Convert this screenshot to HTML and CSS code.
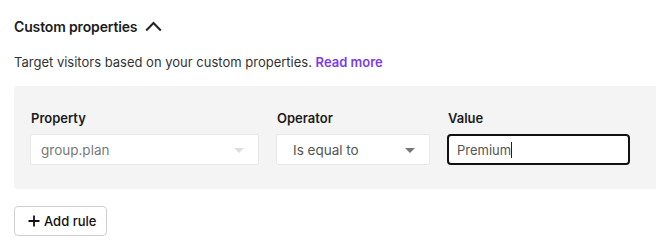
FILE: index.html
```html
<!DOCTYPE html>
<html>
<head>
<meta charset="utf-8">
<link rel="stylesheet" href="styles.css">
</head>
<body>
<div class="page">
  <div class="header">
    <h2 class="title">Custom properties</h2>
    <svg class="chevron" width="17" height="12" viewBox="0 0 17 12"><path d="M1.2 10.5 L8.5 3 L15.8 10.5" fill="none" stroke="#222" stroke-width="2"/></svg>
  </div>
  <p class="desc">Target visitors based on your custom properties. <a class="link">Read more</a></p>
  <div class="panel">
    <div class="field f-prop">
      <label class="label">Property</label>
      <div class="select disabled"><span>group.plan</span><span class="arrow light"></span></div>
    </div>
    <div class="field f-op">
      <label class="label">Operator</label>
      <div class="select op"><span>Is equal to</span><span class="arrow"></span></div>
    </div>
    <div class="field f-val">
      <label class="label">Value</label>
      <div class="input"><span>Premium</span><span class="caret"></span></div>
    </div>
  </div>
  <button class="add"><svg width="12" height="12" viewBox="0 0 12 12"><path d="M6 0.5V11.5M0.5 6H11.5" stroke="#111" stroke-width="1.8"/></svg>Add rule</button>
</div>
</body>
</html>
```
FILE: styles.css
```css
* { box-sizing: border-box; }
html, body { margin: 0; padding: 0; background: #fff; }
body { font-family: Inter, "Noto Sans", sans-serif; color: #222; font-size: 13px; }
.page { padding: 14px 0 0 14px; }
.header { display: flex; align-items: center; gap: 8px; height: 24px; }
.title { margin: 0; font-size: 14px; font-weight: 600; color: #1c1c1c; letter-spacing: -0.15px; }
.desc { margin: 15px 0 0; font-size: 13px; color: #333; line-height: 18px; }
.link { color: #7c3aed; font-weight: 600; }
.panel { margin-top: 15px; background: #f4f4f4; border-radius: 4px 0 0 4px; height: 103px; padding: 24px 0 0 16px; display: grid; grid-template-columns: 229px 154px 183px; column-gap: 17px; }
.label { display: block; font-weight: 600; font-size: 13px; color: #1c1c1c; line-height: 16px; margin-left: 1px; margin-bottom: 8px; }
.select { height: 31px; background: #fff; border: 1px solid #e8e8e8; border-radius: 2px; display: flex; align-items: center; justify-content: space-between; padding: 0 14px 0 10px; color: #7a7a7a; font-size: 13.5px; }
.select.op { padding-left: 16px; color: #555; }
.arrow { width: 0; height: 0; border-left: 5px solid transparent; border-right: 5px solid transparent; border-top: 5px solid #777; margin-top: 2px; }
.arrow.light { border-top-color: #ddd; }
.input { height: 31px; background: #fff; border: 2px solid #111; border-radius: 4px; display: flex; align-items: center; padding-left: 8px; color: #555; }
.caret { width: 1px; height: 16px; background: #222; margin-left: 0; }
.add { margin-top: 17px; height: 30px; width: 93px; border: 1px solid #cfcfcf; border-radius: 4px; background: #fff; display: flex; align-items: center; gap: 4px; padding: 0 0 0 13px; font-family: inherit; font-size: 13px; font-weight: 500; color: #111; }
```
